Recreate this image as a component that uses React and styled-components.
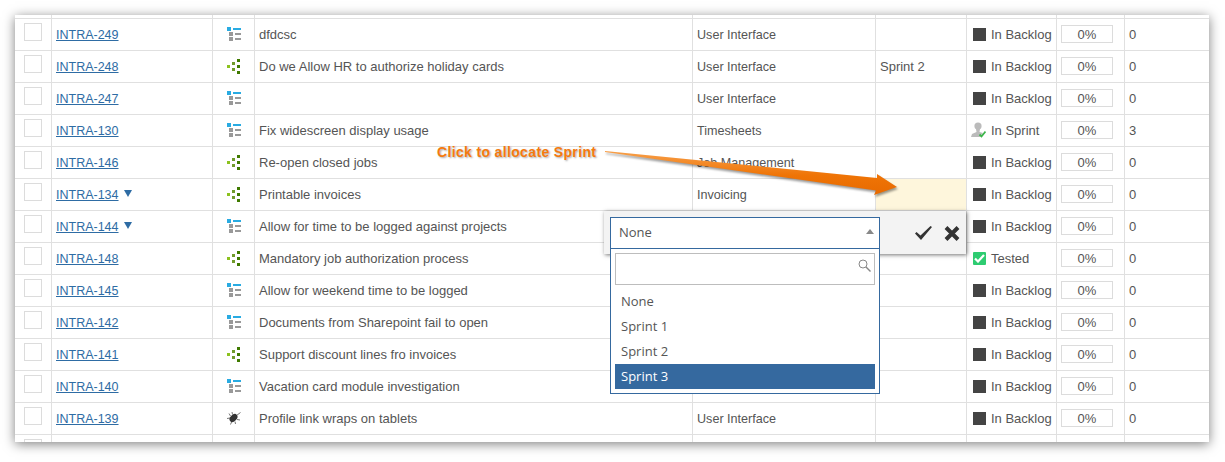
import React from 'react';
import styled, { createGlobalStyle } from 'styled-components';

const GlobalStyle = createGlobalStyle`
    html, body {
        margin: 0;
        padding: 0;
        background: #fff;
    }
`

const Page = styled.div`
    position: relative;
    width: 1225px;
    height: 462px;
    padding: 15px 16px 20px 15px;
    box-sizing: border-box;
    overflow: hidden;
    background: #fff;
    font-family: "Liberation Sans", Arial, sans-serif;
    font-size: 13px;
    color: #555;
`

const Panel = styled.div`
    height: 427px;
    background: #fff;
    overflow: hidden;
    box-shadow: 0 2px 11px rgba(0, 0, 0, .5);
`

const Row = styled.div`
    display: grid;
    grid-template-columns: 37px 161px 42px 438px 183px 91px 90px 68px 1fr;
    height: ${props => props.$height || 32}px;
    box-sizing: border-box;
    border-bottom: 1px solid #e0e0e0;
`

const Cell = styled.div`
    display: flex;
    align-items: center;
    box-sizing: border-box;
    min-width: 0;
    padding-left: 4px;
    padding-bottom: 1px;
    border-right: 1px solid #e0e0e0;
    white-space: nowrap;
    background: ${props => props.$highlight ? '#fef6dc' : 'transparent'};
    &:last-child {
        border-right: 0;
    }
`

const CheckCell = styled(Cell)`
    align-items: flex-start;
    padding: 4px 0 0 9px;
`

const Checkbox = styled.span`
    display: block;
    width: 18px;
    height: 18px;
    box-sizing: border-box;
    border: 1px solid #dcdcdc;
`

const LinkCell = styled(Cell)`
    padding-bottom: 0;
`

const IssueLink = styled.a`
    color: #2e6ca4;
    font-size: 12.5px;
    text-decoration: underline;
`

const Caret = styled.span`
    width: 0;
    height: 0;
    margin-left: 5px;
    margin-top: -3px;
    border-left: 4px solid transparent;
    border-right: 4px solid transparent;
    border-top: 7px solid #2e6ca4;
`

const TypeCell = styled(Cell)`
    padding-left: 14px;
`

const CategoryCell = styled(Cell)`
    padding-bottom: 0;
    font-size: 12.6px;
`

const StatusCell = styled(Cell)`
    padding-left: 6px;
    gap: 5px;
`

const StatusSquare = styled.span`
    display: block;
    width: 13px;
    height: 13px;
    background: #444;
`

const TestedBadge = styled.span`
    display: flex;
    align-items: center;
    justify-content: center;
    width: 13px;
    height: 13px;
    border-radius: 1px;
    background: #2ecc71;
`

const PercentBox = styled.span`
    display: block;
    width: 52px;
    height: 18px;
    line-height: 17px;
    box-sizing: border-box;
    border: 1px solid #dcdcdc;
    text-align: center;
`

const CalloutText = styled.span`
    position: absolute;
    left: 437px;
    top: 144px;
    font-size: 14px;
    font-weight: bold;
    letter-spacing: .35px;
    line-height: 16px;
    color: #f57a0e;
    text-shadow: 1px 1px 2px rgba(0, 0, 0, .35);
    white-space: nowrap;
`

const CalloutArrow = styled.svg`
    position: absolute;
    left: 600px;
    top: 145px;
    filter: drop-shadow(1px 2px 1px rgba(0, 0, 0, .4));
`

const Editor = styled.div`
    position: absolute;
    left: 604px;
    top: 211px;
    display: flex;
    width: 362px;
    height: 43px;
    box-sizing: border-box;
    padding: 6px 0 0 6px;
    background: #f3f3f3;
    box-shadow: 1px 1px 4px rgba(0, 0, 0, .55);
`

const SelectBox = styled.div`
    display: flex;
    align-items: center;
    justify-content: space-between;
    width: 270px;
    height: 32px;
    box-sizing: border-box;
    padding: 0 5px 3px 8px;
    border: 1px solid #35699f;
    background: #fff;
    font-family: "Open Sans", sans-serif;
    font-size: 13px;
`

const SelectArrow = styled.span`
    width: 0;
    height: 0;
    border-left: 4px solid transparent;
    border-right: 4px solid transparent;
    border-bottom: 5px solid #888;
`

const EditorActions = styled.div`
    display: flex;
    align-items: center;
    gap: 12px;
    margin-left: 35px;
    height: 32px;
`

const Dropdown = styled.div`
    position: absolute;
    left: 610px;
    top: 248px;
    width: 270px;
    height: 146px;
    box-sizing: border-box;
    padding: 4px;
    border: 1px solid #35699f;
    background: #fff;
    font-family: "Open Sans", sans-serif;
    font-size: 13px;
`

const SearchBox = styled.div`
    display: flex;
    justify-content: flex-end;
    height: 32px;
    box-sizing: border-box;
    padding: 5px 3px 0 0;
    margin-bottom: 4px;
    border: 1px solid #bdbdbd;
`

const Option = styled.div`
    height: 25px;
    line-height: 25px;
    padding-left: 6px;
    color: ${props => props.$selected ? '#fff' : '#555'};
    background: ${props => props.$selected ? '#35699f' : 'transparent'};
`

const StoryIcon = () => (
    <svg width="14" height="14" viewBox="0 0 14 14">
        <rect x="0" y="0" width="4" height="4" fill="#29abe2" />
        <rect x="6" y="1" width="8" height="2" fill="#29abe2" />
        <rect x="2" y="5" width="4" height="4" fill="#999" />
        <rect x="8" y="6" width="6" height="2" fill="#999" />
        <rect x="2" y="10" width="4" height="4" fill="#999" />
        <rect x="8" y="11" width="6" height="2" fill="#999" />
    </svg>
)

const FeatureIcon = () => (
    <svg width="14" height="15" viewBox="0 0 14 15">
        <rect x="0" y="6" width="3" height="3" fill="#8cc21f" />
        <rect x="5" y="3" width="3" height="3" fill="#6f9a2a" />
        <rect x="5" y="9" width="3" height="3" fill="#6f9a2a" />
        <rect x="10" y="0" width="3" height="3" fill="#3f7a00" />
        <rect x="10" y="6" width="3" height="3" fill="#3f7a00" />
        <rect x="10" y="12" width="3" height="3" fill="#3f7a00" />
    </svg>
)

const BugIcon = () => (
    <svg width="14" height="14" viewBox="0 0 14 14">
        <g stroke="#777" strokeWidth="1" fill="none">
            <path d="M3.5 5 L2 2.5" />
            <path d="M5.5 3.5 L5 1" />
            <path d="M3 7 L0 7.5" />
            <path d="M5 10 L3.5 13.5" />
            <path d="M8 10.5 L8.5 13" />
            <path d="M10 8.5 L13 9" />
            <path d="M9.5 4.5 L13.5 1.5" />
        </g>
        <ellipse cx="6.5" cy="7" rx="4.6" ry="3.1" transform="rotate(-45 6.5 7)" fill="#333" />
    </svg>
)

const SprintIcon = () => (
    <svg width="15" height="16" viewBox="0 0 15 16" style={{ marginLeft: -2, marginRight: 0 }}>
        <circle cx="7" cy="4" r="3.6" fill="#bbb" />
        <path d="M5 7 L9 7 L8.5 10 L12 11 L9 15 L0 15 L1 12 L5.5 10 Z" fill="#bbb" />
        <path d="M8.5 12.5 L10.5 14.5 L14.5 9.5" stroke="#3cb54a" strokeWidth="1.8" fill="none" />
    </svg>
)

const TestedCheck = () => (
    <svg width="11" height="9" viewBox="0 0 11 9">
        <path d="M1 4.5 L4 7.5 L10 1" stroke="#fff" strokeWidth="2.2" fill="none" />
    </svg>
)

const SearchIcon = () => (
    <svg width="13" height="13" viewBox="0 0 13 13">
        <circle cx="5" cy="5" r="4" stroke="#888" strokeWidth="1" fill="none" />
        <path d="M8 8 L12.5 12.5" stroke="#888" strokeWidth="1.4" />
    </svg>
)

const SaveIcon = () => (
    <svg width="17" height="14" viewBox="0 0 17 14">
        <path d="M0 7.5 L1.5 6 L5.5 9.5 L15.5 0 L17 1 L6 14 Z" fill="#333" />
    </svg>
)

const CancelIcon = () => (
    <svg width="16" height="15" viewBox="0 0 16 15">
        <path d="M2 1.5 L14 13.5 M14 1.5 L2 13.5" stroke="#333" strokeWidth="4" />
    </svg>
)

const icons = {
    story: <StoryIcon />,
    feature: <FeatureIcon />,
    bug: <BugIcon />,
}

const statusIcons = {
    'In Backlog': <StatusSquare />,
    'In Sprint': <SprintIcon />,
    'Tested': <TestedBadge><TestedCheck /></TestedBadge>,
}

const issues = [
    { id: 'INTRA-249', type: 'story', title: 'dfdcsc', category: 'User Interface' },
    { id: 'INTRA-248', type: 'feature', title: 'Do we Allow HR to authorize holiday cards', category: 'User Interface', sprint: 'Sprint 2' },
    { id: 'INTRA-247', type: 'story', title: '', category: 'User Interface' },
    { id: 'INTRA-130', type: 'story', title: 'Fix widescreen display usage', category: 'Timesheets', status: 'In Sprint', count: 3 },
    { id: 'INTRA-146', type: 'feature', title: 'Re-open closed jobs', category: 'Job Management' },
    { id: 'INTRA-134', type: 'feature', title: 'Printable invoices', category: 'Invoicing', expand: true, highlight: true },
    { id: 'INTRA-144', type: 'story', title: 'Allow for time to be logged against projects', expand: true },
    { id: 'INTRA-148', type: 'feature', title: 'Mandatory job authorization process', status: 'Tested' },
    { id: 'INTRA-145', type: 'story', title: 'Allow for weekend time to be logged' },
    { id: 'INTRA-142', type: 'story', title: 'Documents from Sharepoint fail to open' },
    { id: 'INTRA-141', type: 'feature', title: 'Support discount lines fro invoices' },
    { id: 'INTRA-140', type: 'story', title: 'Vacation card module investigation' },
    { id: 'INTRA-139', type: 'bug', title: 'Profile link wraps on tablets', category: 'User Interface' },
]

const EmptyRow = ({ height, checkbox }) => (
    <Row $height={height}>
        {checkbox ? <CheckCell><Checkbox /></CheckCell> : <Cell />}
        <Cell /><Cell /><Cell /><Cell /><Cell /><Cell /><Cell /><Cell />
    </Row>
)

const IssueRow = ({ issue }) => {
    const status = issue.status || 'In Backlog'
    return (
        <Row>
            <CheckCell><Checkbox /></CheckCell>
            <LinkCell>
                <IssueLink href="#">{issue.id}</IssueLink>
                {issue.expand && <Caret />}
            </LinkCell>
            <TypeCell>{icons[issue.type]}</TypeCell>
            <Cell>{issue.title}</Cell>
            <CategoryCell>{issue.category}</CategoryCell>
            <Cell $highlight={issue.highlight}>{issue.sprint}</Cell>
            <StatusCell>{statusIcons[status]}{status}</StatusCell>
            <Cell><PercentBox>0%</PercentBox></Cell>
            <Cell>{issue.count || 0}</Cell>
        </Row>
    )
}

const App = () => (
    <Page>
        <GlobalStyle />
        <Panel>
            <EmptyRow height={4} />
            {issues.map(issue => <IssueRow key={issue.id} issue={issue} />)}
            <EmptyRow checkbox />
        </Panel>

        <CalloutText>Click to allocate Sprint</CalloutText>
        <CalloutArrow width="305" height="60" viewBox="600 145 305 60">
            <defs>
                <linearGradient id="arrowFill" x1="0" y1="0" x2="0" y2="1">
                    <stop offset="0" stopColor="#f8a04a" />
                    <stop offset="0.55" stopColor="#ef7406" />
                    <stop offset="1" stopColor="#e86a00" />
                </linearGradient>
            </defs>
            <path d="M605 151 L877 178 L877 174 L897 187 L874 195 L876 190.5 L605 152 Z" fill="url(#arrowFill)" />
        </CalloutArrow>

        <Editor>
            <SelectBox>
                None
                <SelectArrow />
            </SelectBox>
            <EditorActions>
                <SaveIcon />
                <CancelIcon />
            </EditorActions>
        </Editor>
        <Dropdown>
            <SearchBox><SearchIcon /></SearchBox>
            <Option>None</Option>
            <Option>Sprint 1</Option>
            <Option>Sprint 2</Option>
            <Option $selected>Sprint 3</Option>
        </Dropdown>
    </Page>
)

export default App
